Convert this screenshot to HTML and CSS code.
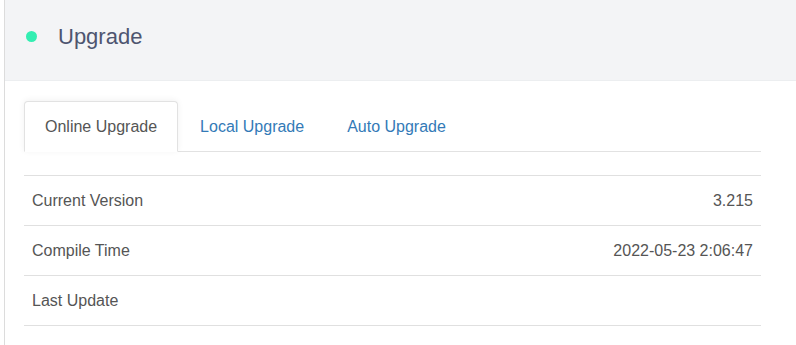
FILE: index.html
```html
<!DOCTYPE html>
<html lang="en">
<head>
<meta charset="UTF-8">
<title>Upgrade</title>
<link rel="stylesheet" href="styles.css">
</head>
<body>

<div class="page">
  <div class="page-header">
    <span class="dot"></span>
    <h1>Upgrade</h1>
  </div>

  <div class="page-body">
    <ul class="nav-tabs">
      <li class="active"><a href="#">Online Upgrade</a></li>
      <li><a href="#">Local Upgrade</a></li>
      <li><a href="#">Auto Upgrade</a></li>
    </ul>

    <table class="info-table">
      <tr>
        <td>Current Version</td>
        <td class="value">3.215</td>
      </tr>
      <tr>
        <td>Compile Time</td>
        <td class="value">2022-05-23 2:06:47</td>
      </tr>
      <tr>
        <td>Last Update</td>
        <td class="value"></td>
      </tr>
    </table>
  </div>
</div>

</body>
</html>
```

FILE: styles.css
```css
* {
  box-sizing: border-box;
}

body, html {
  margin: 0;
  height: 100%;
  background: #fff;
  font-family: 'Liberation Sans', Arial, sans-serif;
}

.page {
  margin-left: 4px;
  min-height: 100%;
  border-left: 1px solid #dcdcdc;
}

.page-header {
  height: 81px;
  background: #f3f4f6;
  display: flex;
  align-items: center;
  padding: 0 0 7px 21px;
  border-bottom: 1px solid #eceef0;
}

.dot {
  width: 11px;
  height: 11px;
  border-radius: 50%;
  background: #33eeb2;
  margin-right: 21px;
}

.page-header h1 {
  margin: 0;
  font-size: 22px;
  font-weight: normal;
  color: #4e5570;
}

.page-body {
  padding: 20px 0 0 19px;
  width: 756px;
}

.nav-tabs {
  list-style: none;
  margin: 0;
  padding: 0;
  display: flex;
  border-bottom: 1px solid #e2e2e2;
  height: 51px;
}

.nav-tabs li {
  margin-right: 1px;
}

.nav-tabs a {
  display: block;
  height: 51px;
  line-height: 50px;
  padding: 0 20px;
  font-size: 16px;
  color: #337ab7;
  text-decoration: none;
  border: 1px solid transparent;
  border-radius: 4px 4px 0 0;
}

.nav-tabs .active a {
  color: #555;
  background: #fff;
  border-color: #e2e2e2;
  border-bottom-color: #fff;
  box-shadow: 0 -1px 6px rgba(0, 0, 0, 0.06);
}

.info-table {
  width: 100%;
  margin-top: 23px;
  border-collapse: collapse;
  border-top: 1px solid #e0e0e0;
  font-size: 16px;
  color: #555;
}

.info-table td {
  height: 50px;
  padding: 0 8px;
  border-bottom: 1px solid #e0e0e0;
}

.info-table .value {
  text-align: right;
}
```
